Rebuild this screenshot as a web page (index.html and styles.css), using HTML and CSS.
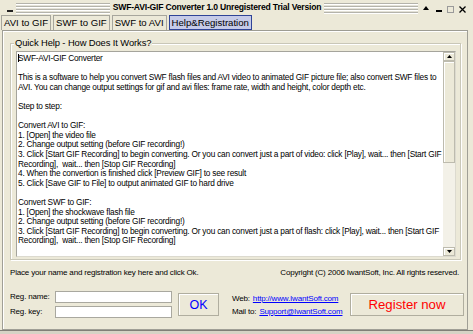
FILE: index.html
```html
<!DOCTYPE html>
<html>
<head>
<meta charset="utf-8">
<link rel="stylesheet" href="styles.css">
</head>
<body>
<div class="window">
  <div class="titlebar">
    <span class="sys"></span>
    <span class="stripes"></span>
    <span class="title">SWF-AVI-GIF Converter 1.0 Unregistered Trial Version</span>
    <span class="stripes"></span>
    <span class="ctrls">
      <svg class="c-up" width="6" height="4" viewBox="0 0 6 4"><path d="M0 4 L3 0 L6 4 Z" fill="#000"/></svg>
      <svg class="c-min" width="6" height="2" viewBox="0 0 6 2"><rect x="0" y="0" width="6" height="2" fill="#000"/></svg>
      <svg class="c-max" width="7" height="7" viewBox="0 0 7 7"><rect x="0.5" y="0.5" width="6" height="6" fill="none" stroke="#9a9a9a"/></svg>
      <svg class="c-x" width="7" height="7" viewBox="0 0 7 7"><path d="M0.5 0.5 L6.5 6.5 M6.5 0.5 L0.5 6.5" stroke="#000" stroke-width="1.3"/></svg>
    </span>
  </div>
  <div class="tabs">
    <div class="tab">AVI to GIF</div>
    <div class="tab">SWF to GIF</div>
    <div class="tab">SWF to AVI</div>
    <div class="tab active">Help&amp;Registration</div>
  </div>
  <div class="panel">
    <div class="group">
      <span class="legend">Quick Help - How Does It Works?</span>
      <div class="memo">
        <div class="text">
          <div class="ln"><span class="caret"></span>SWF-AVI-GIF Converter</div>
          <div class="ln"></div>
          <div class="ln">This is a software to help you convert SWF flash files and AVI video to animated GIF picture file; also convert SWF files to</div>
          <div class="ln">AVI. You can change output settings for gif and avi files: frame rate, width and height, color depth etc.</div>
          <div class="ln"></div>
          <div class="ln">Step to step:</div>
          <div class="ln"></div>
          <div class="ln">Convert AVI to GIF:</div>
          <div class="ln">1. [Open] the video file</div>
          <div class="ln">2. Change output setting (before GIF recording!)</div>
          <div class="ln">3. Click [Start GIF Recording] to begin converting. Or you can convert just a part of video: click [Play], wait... then [Start GIF</div>
          <div class="ln">Recording],&nbsp; wait... then [Stop GIF Recording]</div>
          <div class="ln">4. When the convertion is finished click [Preview GIF] to see result</div>
          <div class="ln">5. Click [Save GIF to File] to output animated GIF to hard drive</div>
          <div class="ln"></div>
          <div class="ln">Convert SWF to GIF:</div>
          <div class="ln">1. [Open] the shockwave flash file</div>
          <div class="ln">2. Change output setting (before GIF recording!)</div>
          <div class="ln">3. Click [Start GIF Recording] to begin converting. Or you can convert just a part of flash: click [Play], wait... then [Start GIF</div>
          <div class="ln">Recording],&nbsp; wait... then [Stop GIF Recording]</div>
        </div>
        <div class="scroll">
          <div class="sbtn"><svg width="5" height="3" viewBox="0 0 5 3"><path d="M0 3 L2.5 0 L5 3 Z" fill="#000"/></svg></div>
          <div class="thumb"></div>
          <div class="track"></div>
          <div class="sbtn"><svg width="5" height="3" viewBox="0 0 5 3"><path d="M0 0 L2.5 3 L5 0 Z" fill="#000"/></svg></div>
        </div>
      </div>
    </div>
    <div class="bottom">
      <div class="info">
        <span>Place your name and registration key here and click Ok.</span>
        <span class="copy">Copyright (C) 2006 IwantSoft, Inc. All rights reserved.</span>
      </div>
      <div class="regrow">
        <div class="fields">
          <span class="lbl">Reg. name:</span><span class="input"></span>
          <span class="lbl">Reg. key:</span><span class="input"></span>
        </div>
        <div class="btn ok">OK</div>
        <div class="links">
          <div class="lrow">Web: <span class="link">http://www.IwantSoft.com</span></div>
          <div class="lrow">Mail to: <span class="link">Support@IwantSoft.com</span></div>
        </div>
        <div class="btn reg">Register now</div>
      </div>
    </div>
  </div>
  <div class="frame-bottom"></div>
</div>
</body>
</html>
```
FILE: styles.css
```css
* { box-sizing: border-box; }
html, body { margin: 0; padding: 0; }
body {
  background: #ece9d8;
  font-family: "Liberation Sans", Arial, sans-serif;
  color: #000;
}
.window {
  width: 473px;
  height: 334px;
  display: flex;
  flex-direction: column;
  overflow: hidden;
}
.titlebar {
  height: 15px;
  display: flex;
  align-items: center;
  padding: 0 7px 0 7px;
}
.sys {
  width: 6px;
  height: 2px;
  background: #222;
  margin: 6px 3px 0 0;
}
.stripes {
  flex: 1;
  height: 11px;
  margin-top: 1px;
  background: repeating-linear-gradient(to bottom, #b4b3ab 0 1px, #ffffff 1px 2px, #e4e2d7 2px 3px);
}
.title {
  font-weight: bold;
  font-size: 8.6px;
  letter-spacing: -0.2px;
  padding: 0 3px;
  white-space: nowrap;
  line-height: 15px;
}
.ctrls {
  display: flex;
  align-items: center;
  margin-left: 5px;
  gap: 0;
}
.ctrls svg { display: block; }
.c-up { margin-top: 0px; }
.c-min { margin-left: 7px; margin-top: 6px; }
.c-max { margin-left: 5px; margin-top: 3px; }
.c-x { margin-left: 5px; margin-top: 3px; }
.tabs {
  height: 15px;
  display: flex;
  gap: 2px;
  padding-left: 1px;
}
.tab {
  height: 15px;
  border: 1px solid #a7a69d;
  border-bottom: none;
  padding: 0 2px;
  font-size: 9.6px;
  line-height: 14px;
  white-space: nowrap;
  background: #ece9d8;
}
.tab.active {
  background: #c6cbe8;
  border: 1px solid #2f4497;
  padding: 0 2px;
}
.panel {
  height: 300px;
  margin: 0 5px 0 2px;
  border: 1px solid #a09f96;
  border-top-color: #9d9c93;
  box-shadow: inset 1px 1px 0 #ffffff;
  display: flex;
  flex-direction: column;
}
.group {
  position: relative;
  height: 217px;
  margin: 12px 6px 0 7px;
  border: 1px solid #c9c7b8;
  box-shadow: inset 1px 1px 0 #ffffff, 1px 1px 0 #ffffff;
  padding: 7px 4px 2px 5px;
}
.legend {
  position: absolute;
  left: 3px;
  top: -7px;
  padding: 0 1px;
  background: #ece9d8;
  font-size: 9.4px;
  letter-spacing: -0.1px;
  line-height: 12px;
  white-space: nowrap;
}
.memo {
  height: 206px;
  border: 1px solid #a5a49c;
  border-right-color: #dcdacf;
  border-bottom-color: #dcdacf;
  background: #fff;
  display: flex;
}
.text {
  flex: 1;
  padding: 2px 0 0 1px;
  font-size: 8.3px;
  letter-spacing: -0.22px;
  line-height: 9.6px;
  overflow: hidden;
}
.ln {
  height: 9.6px;
  white-space: nowrap;
}
.caret {
  display: inline-block;
  width: 1px;
  height: 8px;
  background: #000;
  vertical-align: -1px;
  margin-right: -1px;
}
.scroll {
  width: 12px;
  display: flex;
  flex-direction: column;
  background: #f3f1e8;
}
.sbtn {
  height: 9px;
  background: #ece9d8;
  border: 1px solid #bdbbae;
  box-shadow: inset 1px 1px 0 #fff;
  display: flex;
  align-items: center;
  justify-content: center;
}
.sbtn svg { display: block; }
.thumb {
  height: 102px;
  background: #ece9d8;
  border: 1px solid #bdbbae;
  box-shadow: inset 1px 1px 0 #fff;
}
.track { flex: 1; }
.bottom {
  padding: 0 3px 0 7px;
}
.info {
  display: flex;
  justify-content: space-between;
  margin-top: 7px;
  height: 12px;
  font-size: 8px;
  letter-spacing: -0.18px;
  line-height: 12px;
  white-space: nowrap;
}
.copy { margin-right: 5px; }
.regrow {
  display: flex;
  align-items: flex-start;
  margin-top: 12px;
}
.fields {
  display: grid;
  grid-template-columns: 45px 117px;
  row-gap: 3px;
  font-size: 8px;
  letter-spacing: -0.18px;
}
.lbl {
  line-height: 12px;
  white-space: nowrap;
}
.input {
  height: 12px;
  background: #fff;
  border: 1px solid #a9a89f;
}
.btn {
  height: 23px;
  margin-top: 2px;
  border: 1px solid #b0ae9f;
  box-shadow: inset 1px 1px 0 #fff;
  background: #ece9d8;
  display: flex;
  align-items: center;
  justify-content: center;
  white-space: nowrap;
}
.ok {
  width: 41px;
  margin-left: 6px;
  color: #0000ff;
  font-size: 12.5px;
}
.links {
  margin-left: 13px;
  margin-top: 1px;
  font-size: 8px;
  letter-spacing: -0.18px;
  line-height: 13px;
  white-space: nowrap;
}
.link {
  color: #0000ff;
  text-decoration: underline;
  margin-left: 1px;
}
.reg {
  width: 114px;
  margin-left: auto;
  color: #ff0000;
  font-size: 13.2px;
}
.frame-bottom {
  height: 4px;
  border-top: 1px solid #807f78;
  background: #d6d3c6;
}
```
